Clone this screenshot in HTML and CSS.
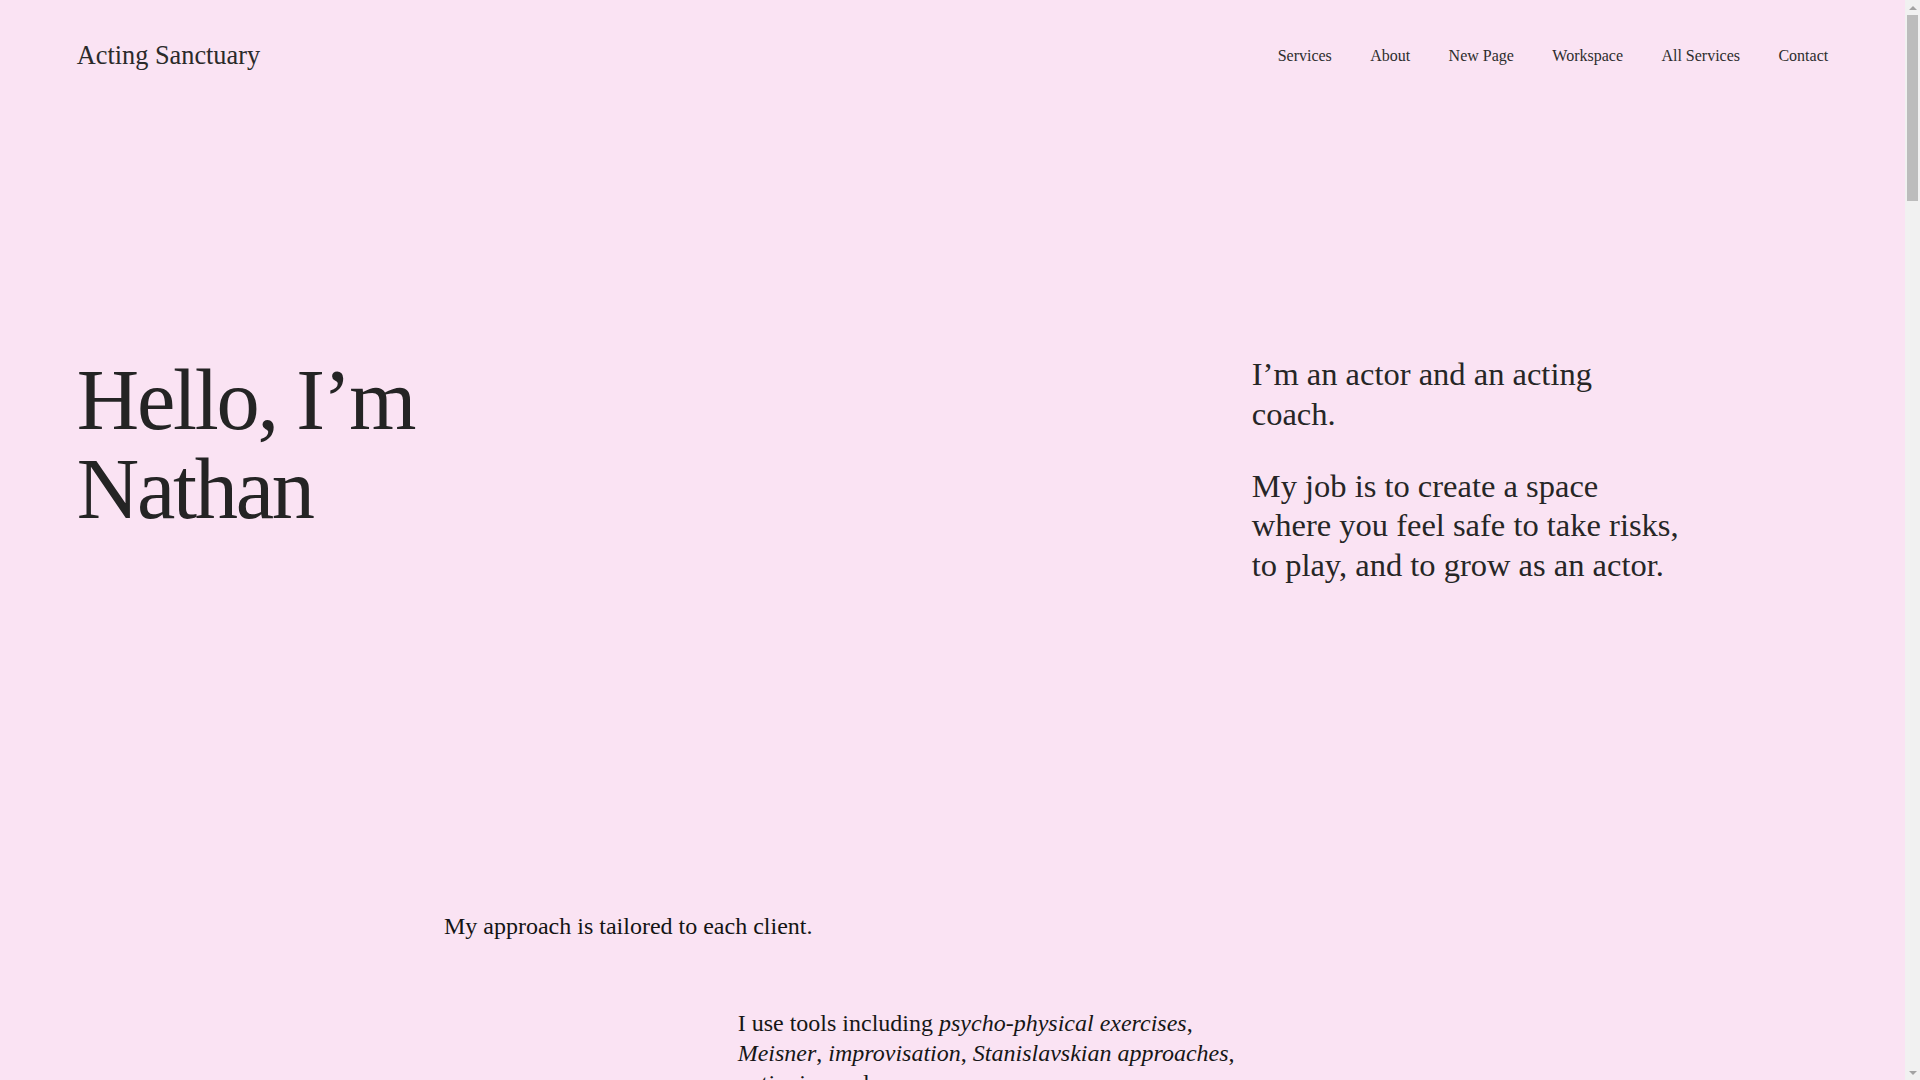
FILE: index.html
```html
<!DOCTYPE html>
<html lang="en">
<head>
<meta charset="utf-8">
<title>Acting Sanctuary</title>
<link rel="stylesheet" href="styles.css">
</head>
<body>
<header class="site-header">
  <a class="logo" href="#">Acting Sanctuary</a>
  <nav class="main-nav">
    <a href="#">Services</a>
    <a href="#">About</a>
    <a href="#">New Page</a>
    <a href="#">Workspace</a>
    <a href="#">All Services</a>
    <a href="#">Contact</a>
  </nav>
</header>
<main>
  <section class="grid hero">
    <h1 class="hero-title">Hello, I’m Nathan</h1>
    <div class="hero-text">
      <p>I’m an actor and an acting coach.</p>
      <p>My job is to create a space where you feel safe to take risks, to play, and to grow as an actor.</p>
    </div>
  </section>
  <section class="grid approach">
    <p class="approach-lead">My approach is tailored to each client.</p>
  </section>
  <section class="grid tools">
    <p class="tools-text">I use tools including <em>psycho-physical exercises</em>, <em>Meisner</em>, <em>improvisation</em>, <em>Stanislavskian approaches</em>, <em>actioning</em> and more.</p>
  </section>
</main>
<div class="scrollbar" aria-hidden="true">
  <div class="sb-btn sb-up"><span class="sb-arrow"></span></div>
  <div class="sb-thumb"></div>
  <div class="sb-space"></div>
  <div class="sb-btn sb-down"><span class="sb-arrow"></span></div>
</div>
</body>
</html>
```

FILE: styles.css
```css
html, body {
  padding: 0;
}

html {
  margin: 0;
  overflow: hidden;
}

body {
  margin: 0 15px 0 0;
  background: #fae3f3;
  color: #262626;
  font-family: "Liberation Serif", "Times New Roman", serif;
  height: 1080px;
  overflow: hidden;
}

a {
  color: inherit;
  text-decoration: none;
}

.site-header {
  display: flex;
  justify-content: space-between;
  align-items: center;
  padding: 41px 4vw 0;
}

.logo {
  font-size: 26.3px;
  line-height: 30px;
  color: #2a2a2a;
}

.main-nav {
  display: flex;
  align-items: center;
}

.main-nav a {
  font-size: 16px;
  line-height: 20px;
  margin-left: 2vw;
  color: #2d2d2d;
}

.grid {
  display: grid;
  grid-template-columns: repeat(24, minmax(0, 1fr));
  column-gap: 11px;
  padding: 0 4vw;
}

.hero {
  margin-top: 285px;
  align-items: start;
}

.hero-title {
  grid-column: 1 / span 8;
  margin: 0;
  font-weight: normal;
  font-size: 86.4px;
  line-height: 89px;
  letter-spacing: -0.026em;
  color: #242424;
}

.hero-text {
  grid-column: 17 / span 6;
  margin-top: -1px;
}

.hero-text p {
  margin: 0 0 32.5px;
  font-size: 32.5px;
  line-height: 39.6px;
  color: #262626;
}

.hero-text p:last-child {
  margin-bottom: 0;
}

.approach {
  margin-top: 325.5px;
}

.approach-lead {
  grid-column: 6 / span 8;
  margin: 0;
  font-size: 24px;
  line-height: 31.2px;
  color: #141414;
}

.tools {
  margin-top: 66px;
}

.tools-text {
  grid-column: 10 / span 7;
  margin: 0;
  font-size: 24px;
  line-height: 30px;
  color: #161616;
}

/* simulated browser scrollbar */
.scrollbar {
  position: fixed;
  top: 0;
  right: 0;
  width: 15px;
  height: 100vh;
  background: #f1f1f1;
  display: flex;
  flex-direction: column;
}

.sb-btn {
  height: 15px;
  display: flex;
  align-items: center;
  justify-content: center;
  flex: none;
}

.sb-arrow {
  width: 0;
  height: 0;
  border-left: 4px solid transparent;
  border-right: 4px solid transparent;
}

.sb-up .sb-arrow {
  border-bottom: 4px solid #a3a3a3;
}

.sb-down .sb-arrow {
  border-top: 4px solid #a3a3a3;
}

.sb-thumb {
  height: 186px;
  margin: 0 2px;
  background: #bcbcbc;
  flex: none;
}

.sb-space {
  flex: 1;
}
```
